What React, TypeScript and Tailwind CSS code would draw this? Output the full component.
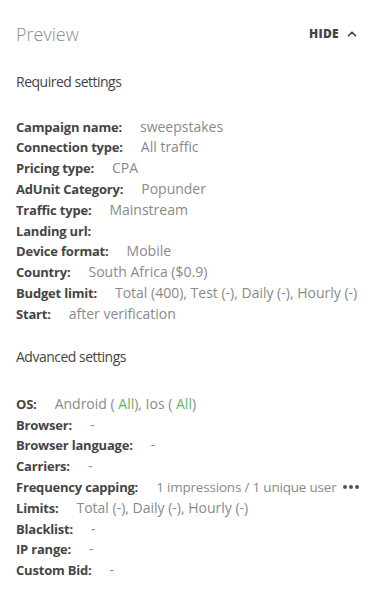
import { ChevronUp } from "lucide-react";

type Row = { label: string; value?: React.ReactNode };

const required: Row[] = [
  { label: "Campaign name:", value: "sweepstakes" },
  { label: "Connection type:", value: "All traffic" },
  { label: "Pricing type:", value: "CPA" },
  { label: "AdUnit Category:", value: "Popunder" },
  { label: "Traffic type:", value: "Mainstream" },
  { label: "Landing url:" },
  { label: "Device format:", value: "Mobile" },
  { label: "Country:", value: "South Africa ($0.9)" },
  { label: "Budget limit:", value: "Total (400), Test (-), Daily (-), Hourly (-)" },
  { label: "Start:", value: "after verification" },
];

const advanced: Row[] = [
  {
    label: "OS:",
    value: (
      <>
        Android ( <span className="text-[#5cb85c]">All</span>), Ios ({" "}
        <span className="text-[#5cb85c]">All</span>)
      </>
    ),
  },
  { label: "Browser:", value: "-" },
  { label: "Browser language:", value: "-" },
  { label: "Carriers:", value: "-" },
  { label: "Frequency capping:", value: "freq" },
  { label: "Limits:", value: "Total (-), Daily (-), Hourly (-)" },
  { label: "Blacklist:", value: "-" },
  { label: "IP range:", value: "-" },
  { label: "Custom Bid:", value: "-" },
];

function Line({ row }: { row: Row }) {
  return (
    <div className="flex items-center gap-[18px] h-[20.8px] text-[13px] leading-[20.8px] whitespace-nowrap">
      <span className="font-bold text-[#454545] tracking-[-0.2px]">{row.label}</span>
      {row.value === "freq" ? (
        <span className="flex items-center gap-[6px] text-[#8a8a8a]">
          <span className="text-[13.5px] tracking-[-0.2px]">1 impressions / 1 unique user</span>
          <span className="flex gap-[2px]">
            <i className="w-[4px] h-[4px] rounded-full bg-[#555]" />
            <i className="w-[4px] h-[4px] rounded-full bg-[#555]" />
            <i className="w-[4px] h-[4px] rounded-full bg-[#555]" />
          </span>
        </span>
      ) : (
        row.value && <span className="text-[14px] text-[#8a8a8a]">{row.value}</span>
      )}
    </div>
  );
}

export default function App() {
  return (
    <div
      className="w-[379px] h-[600px] bg-white pl-4 pr-5 pt-5"
      style={{ fontFamily: "'Open Sans', Lato, sans-serif" }}
    >
      <div className="flex items-center justify-between h-7">
        <div className="text-[18px] font-light text-[#8c8c8c]">Preview</div>
        <button className="flex items-center gap-[6px] text-[12px] font-extrabold tracking-[0.3px] text-[#444]">
          HIDE
          <ChevronUp size={14} strokeWidth={3} />
        </button>
      </div>

      <div className="mt-6 h-5 text-[14px] leading-5 text-[#444] tracking-[-0.5px]">
        Required settings
      </div>
      <div className="mt-[24.6px]">
        {required.map((r) => (
          <Line key={r.label} row={r} />
        ))}
      </div>

      <div className="mt-[22.6px] h-5 text-[14px] leading-5 text-[#444] tracking-[-0.5px]">
        Advanced settings
      </div>
      <div className="mt-[26.6px]">
        {advanced.map((r) => (
          <Line key={r.label} row={r} />
        ))}
      </div>
    </div>
  );
}
